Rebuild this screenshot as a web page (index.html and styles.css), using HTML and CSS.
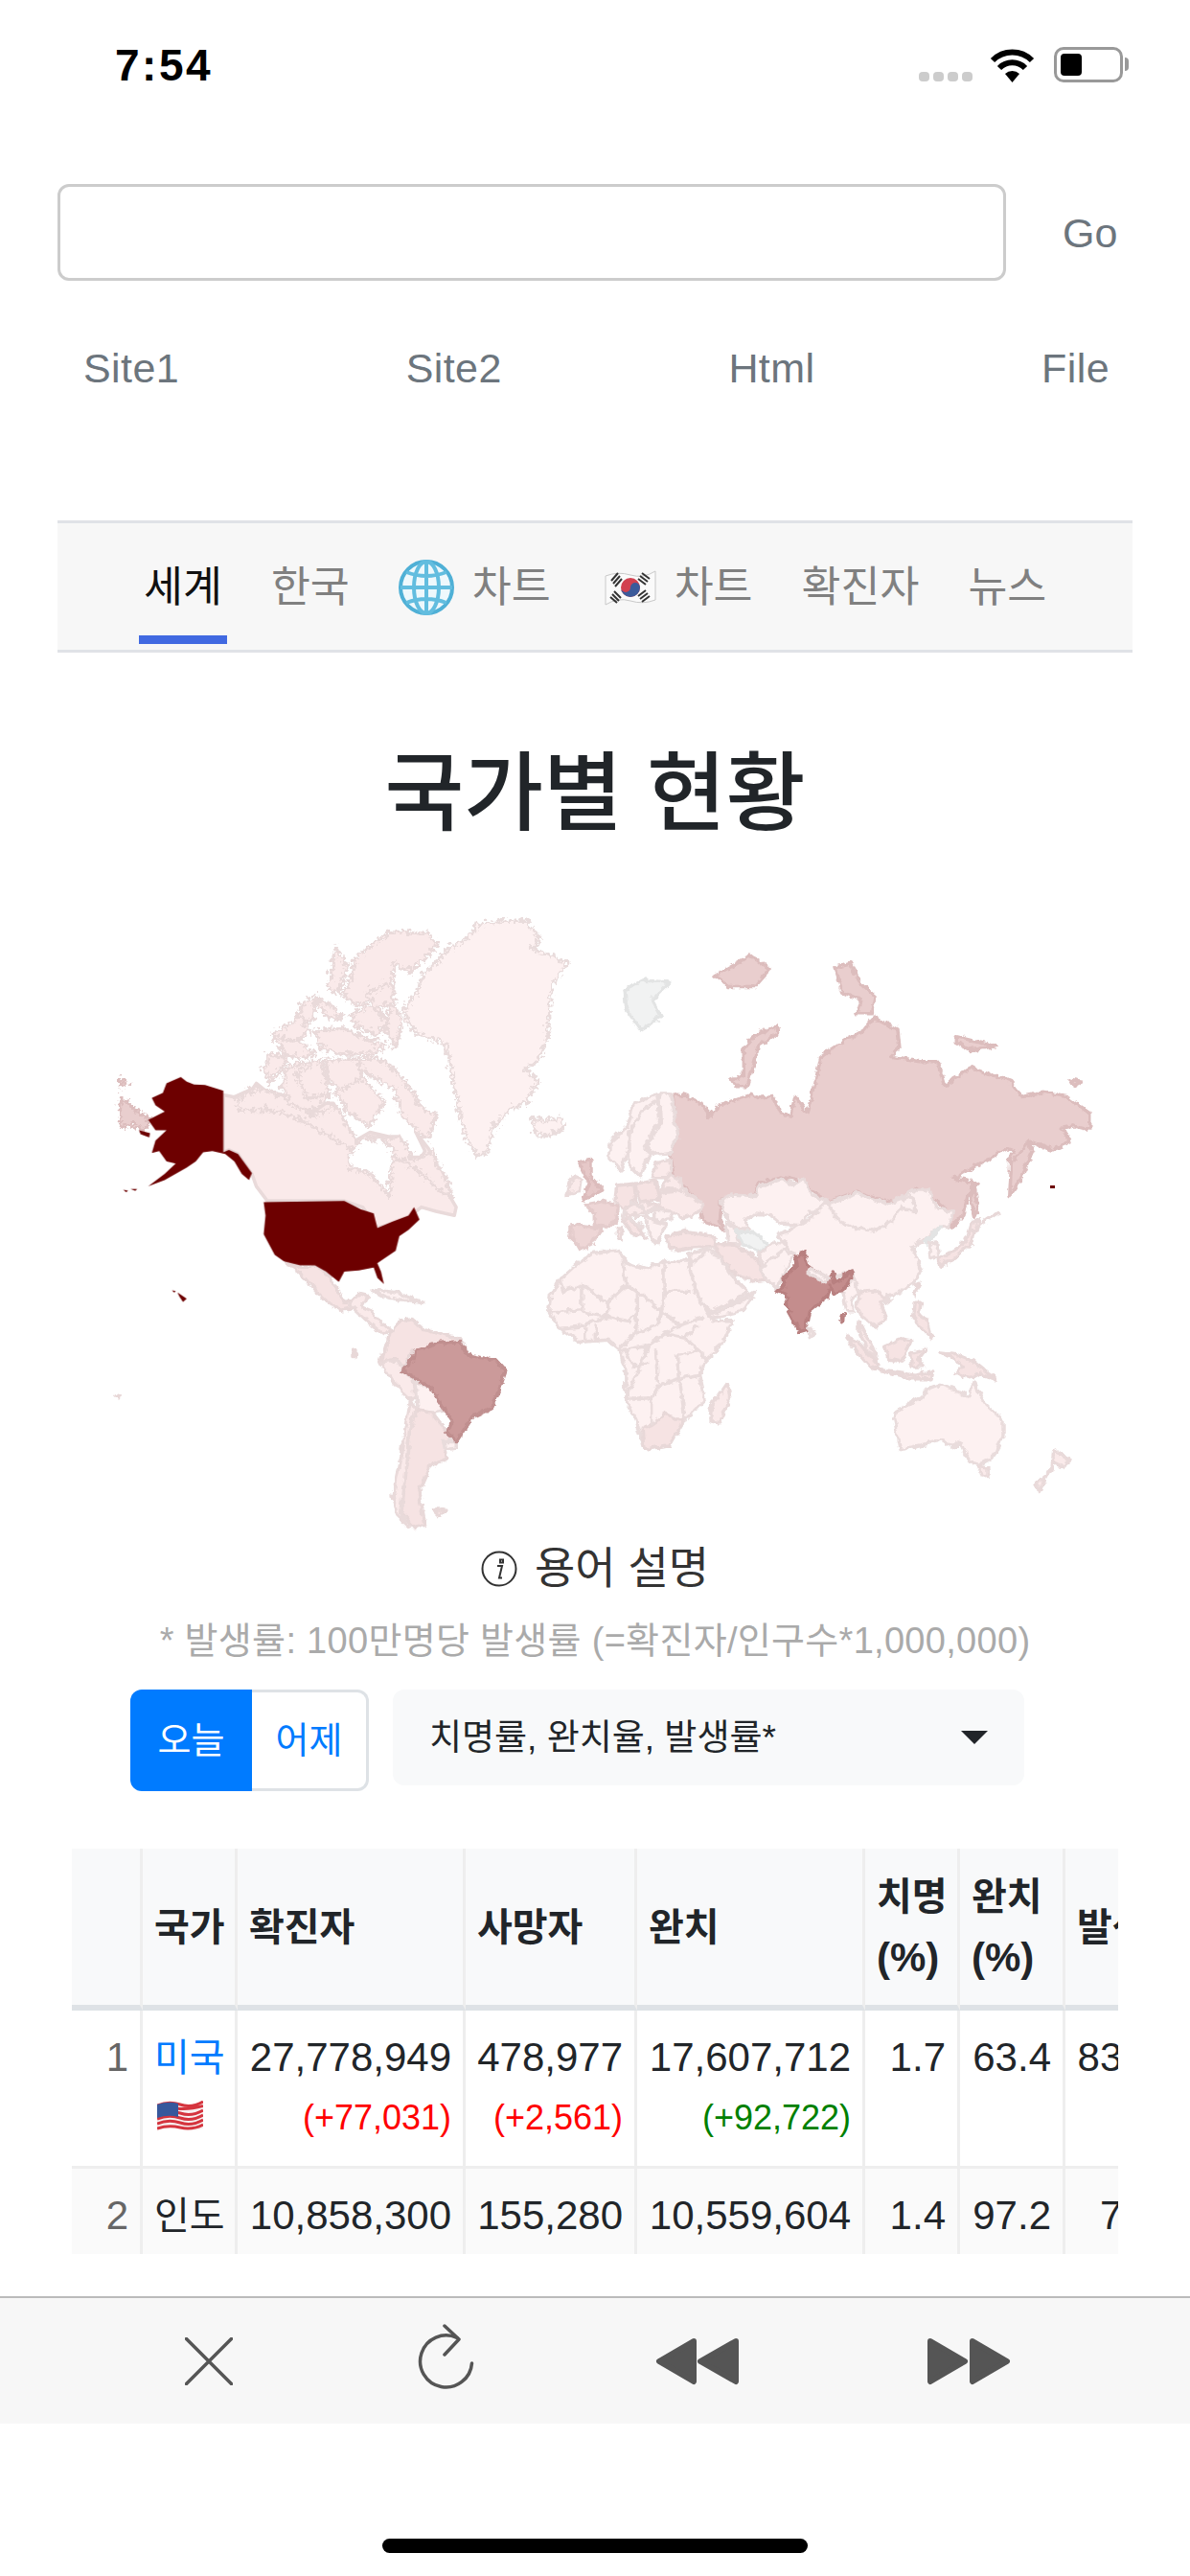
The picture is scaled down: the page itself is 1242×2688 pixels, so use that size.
FILE: index.html
```html
<!DOCTYPE html>
<html lang="ko">
<head>
    <meta charset="UTF-8">
    <meta name="viewport" content="width=device-width, initial-scale=1.0">
    <title>국가별 현황</title>
    <link rel="stylesheet" href="styles.css">
</head>
<body>

<div class="status-bar">
    <span class="clock">7:54</span>
    <div class="status-icons">
        <span class="signal"><i></i><i></i><i></i><i></i></span>
        <svg class="wifi" width="47" height="36" viewBox="0 0 47 36">
            <path d="M3 13A29 29 0 0 1 44 13" fill="none" stroke="#000" stroke-width="6"/>
            <path d="M10 21A19 19 0 0 1 37 21" fill="none" stroke="#000" stroke-width="6"/>
            <path d="M16 27L23.5 36L31 27A11 11 0 0 0 16 27Z" fill="#000"/>
        </svg>
        <span class="battery"><b></b></span>
    </div>
</div>

<div class="url-row">
    <input class="url-input" type="text">
    <span class="go">Go</span>
</div>

<div class="site-links">
    <span>Site1</span>
    <span>Site2</span>
    <span>Html</span>
    <span>File</span>
</div>

<div class="tabs">
    <span class="tab active">세계</span>
    <span class="tab">한국</span>
    <span class="tab">
        <svg width="58" height="58" viewBox="0 0 58 58">
            <circle cx="29" cy="29" r="27" fill="#eef8fc" stroke="#4fb0d6" stroke-width="4"/>
            <ellipse cx="29" cy="29" rx="13" ry="27" fill="none" stroke="#62bddf" stroke-width="4"/>
            <path d="M29 2V56M2 29H56M8 13Q29 21 50 13M8 45Q29 37 50 45" fill="none" stroke="#62bddf" stroke-width="4"/>
        </svg>
        차트
    </span>
    <span class="tab">
        <svg class="kr-flag" width="54" height="40" viewBox="0 0 54 40">
            <path d="M1 8Q14 3 27 7T53 3V33Q40 38 27 34T1 38Z" fill="#fafafa" stroke="#c9c9c9" stroke-width="1"/>
            <circle cx="27" cy="20" r="10" fill="#d2404f"/>
            <path d="M17 20A5 5 0 0 0 27 20A5 5 0 0 1 37 20A10 10 0 0 1 17 20Z" fill="#3b5a9a"/>
            <path d="M9 16L16 8M11 19L18 11M7 13L14 5M37 8L45 14M35 11L43 17M39 5L47 11M8 27L15 34M6 30L13 36M10 24L17 31M37 32L45 26M39 35L47 29M35 29L43 23" stroke="#333" stroke-width="2" fill="none"/>
        </svg>
        차트
    </span>
    <span class="tab">확진자</span>
    <span class="tab">뉴스</span>
</div>

<h1 class="page-title">국가별 현황</h1>

<svg class="world-map" width="1242" height="650" viewBox="0 950 1242 650">
    <defs>
        <filter id="rough" filterUnits="userSpaceOnUse" x="0" y="950" width="1242" height="650">
            <feTurbulence type="turbulence" baseFrequency="0.16" numOctaves="2" seed="4"/>
            <feDisplacementMap in="SourceGraphic" scale="11" xChannelSelector="R" yChannelSelector="G"/>
        </filter>
        <filter id="mild" filterUnits="userSpaceOnUse" x="0" y="950" width="1242" height="650">
            <feTurbulence type="turbulence" baseFrequency="0.09" numOctaves="2" seed="9"/>
            <feDisplacementMap in="SourceGraphic" scale="6" xChannelSelector="R" yChannelSelector="G"/>
        </filter>
    </defs>
    <g transform="translate(80 930) scale(.3827 .4337)">
        <polygon class="g2" points="400,490 430,495 480,475 490,462 515,480 560,490 575,515 630,510 640,535 680,510 700,510 740,570 760,600 800,580 850,590 880,590 910,640 940,640 950,625 925,580 960,620 1000,690 1015,730 1035,760 1030,780 980,770 940,760 905,785 860,800 820,810 780,760 730,745 520,745 490,710 478,680 440,632 415,622 400,628"/>
    </g>
    <g class="rough">
        <g transform="translate(80 930) scale(.3827 .4337)">
            <polygon class="r" points="111,490 140,510 190,540 175,570 145,555 111,560"/>
            <polygon class="r" points="111,445 135,455 115,465"/>
            <polygon class="g2" points="430,495 490,465 560,490 640,535 700,510 740,570 760,600 800,580 880,590 910,640 950,625 960,620 1000,690 1015,730 990,720 940,680 880,640 800,620 730,610 660,570 600,540 520,520 440,520"/>
            <polygon class="hole" points="730,630 770,590 830,590 860,620 850,660 845,730 820,700 790,670 740,660"/>
            <polygon class="g2" points="760,400 800,395 850,410 900,470 940,520 975,530 950,590 920,570 880,530 860,470 820,450 780,430"/>
            <polygon class="g2" points="560,420 640,400 660,430 640,470 690,480 640,520 580,510 555,470"/>
            <polygon class="g2" points="505,420 515,385 570,390 550,420 520,455"/>
            <polygon class="g2" points="750,160 800,120 850,90 950,95 975,125 900,190 860,170 850,250 830,240 770,270 720,250 740,200"/>
            <polygon class="g2" points="525,340 580,310 620,275 625,340 590,350 560,365"/>
            <polygon class="g2" points="650,250 690,270 720,300 680,300 660,280"/>
            <polygon class="g2" points="640,330 720,320 770,345 840,365 800,385 720,385 660,370"/>
            <polygon class="g2" points="740,290 800,270 850,310 810,340 760,320"/>
            <polygon class="g2" points="670,400 760,395 770,440 720,480 680,450"/>
            <polygon class="g2" points="590,430 660,400 680,480 620,490"/>
            <polygon class="g2" points="700,480 770,440 830,500 790,560 730,520"/>
            <polygon class="g2" points="700,130 730,170 710,240 680,230 690,170"/>
            <polygon class="g2" points="600,270 650,245 640,300 610,310"/>
            <polygon class="g2" points="530,345 600,355 640,385 600,395 560,385"/>
            <polygon class="g2" points="850,260 880,300 860,370 835,320"/>
            <polygon class="g2" points="780,240 850,215 860,260 810,275"/>
            <polygon class="g1" points="885,280 920,240 930,205 975,165 1010,130 1060,105 1085,75 1150,65 1220,65 1255,110 1235,130 1290,150 1330,165 1290,220 1280,290 1275,350 1250,400 1215,420 1250,450 1220,500 1170,520 1130,560 1110,620 1090,630 1060,600 1040,540 1030,490 1015,430 1000,360 940,345 900,320"/>
            <polygon class="g1" points="1235,540 1270,545 1315,540 1318,565 1275,582 1245,578"/>
        </g>
    </g>
    <g class="mild">
        <g transform="translate(80 930) scale(.3827 .4337)">
            <polygon class="g3" points="565,890 610,900 650,900 690,925 710,960 725,985 760,975 745,1000 720,1005 680,985 650,960 630,940 600,910"/>
            <polygon class="g2" points="740,990 765,965 790,970 775,995 800,1005 815,1025 850,1050 835,1065 800,1040 770,1015"/>
            <polygon class="g1" points="800,955 860,960 940,985 880,980 840,975"/>
            <polygon class="g3" points="850,1060 880,1030 910,1025 940,1050 985,1060 1045,1075 1060,1100 1015,1095 985,1085 960,1105 915,1100 885,1145 870,1120 825,1130"/>
            <polygon class="g2" points="825,1130 870,1125 885,1150 915,1170 920,1220 900,1215 860,1180"/>
            <polygon class="g1" points="920,1175 960,1190 990,1230 1000,1245 965,1250 925,1245"/>
            <polygon class="g3" points="920,1245 965,1250 1000,1290 1020,1300 1000,1340 1005,1360 960,1380 930,1440 945,1520 920,1530 880,1490 895,1380 905,1300"/>
            <polygon class="g2" points="905,1220 920,1245 905,1300 895,1380 880,1490 900,1525 870,1500 860,1450 880,1360 895,1280"/>
            <polygon class="g1" points="995,1320 1030,1320 1030,1335 1000,1340"/>
            <polygon class="g3" points="750,1100 762,1112 750,1115"/>
            <polygon class="g3" points="968,1485 1003,1485 985,1500"/>
            <polygon class="g3" points="102,1210 118,1212 110,1217"/>
            <polygon class="br" points="1045,1080 1060,1110 1140,1125 1165,1150 1130,1240 1070,1265 1030,1320 1005,1300 1020,1270 990,1230 960,1190 925,1170 885,1150 915,1120 920,1100 980,1085"/>
        </g>
        <g transform="translate(560 930) scale(.3827 .4337)">
            <polygon class="sv" points="235,235 290,210 360,215 310,260 335,300 280,330 240,280"/>
            <polygon class="r" points="480,200 520,180 580,150 630,185 590,225 520,225"/>
            <polygon class="r" points="810,180 850,170 880,220 920,250 910,290 870,290 880,260 830,240"/>
            <polygon class="r" points="1140,345 1250,370 1180,380 1140,360"/>
            <polygon class="r" points="1450,450 1480,455 1460,465"/>
            <polygon class="r" points="530,450 560,440 560,380 590,345 650,320 655,340 600,370 585,420 570,465 540,465"/>
            <polygon class="r" points="365,485 400,490 450,510 465,540 480,525 495,510 530,500 580,485 600,495 640,490 660,530 690,535 700,490 735,530 750,480 770,395 830,360 890,330 915,300 980,330 985,375 960,395 1040,405 1090,405 1110,465 1180,420 1240,440 1290,455 1320,490 1380,480 1440,490 1507,530 1507,570 1460,560 1430,565 1450,600 1400,620 1345,600 1300,670 1285,640 1300,620 1280,615 1230,640 1170,670 1135,690 1175,695 1200,700 1170,730 1160,775 1130,805 1105,790 1110,760 1060,720 1030,710 1020,745 960,745 870,720 790,745 715,695 660,685 600,700 590,730 500,740 495,790 510,810 450,790 435,740 370,690 360,630 380,590"/>
            <polygon class="r" points="1285,730 1290,650 1340,600 1350,620 1330,660 1310,700"/>
            <polygon class="r" points="1185,690 1200,760 1190,780 1180,740"/>
            <polygon class="g1" points="35,970 60,930 110,890 150,865 220,860 240,890 290,905 340,890 410,885 430,960 480,1030 530,1030 500,1090 460,1120 440,1160 455,1220 400,1270 360,1330 290,1340 270,1280 240,1215 240,1160 225,1100 190,1075 110,1080 60,1050 30,1010"/>
            <polygon class="g3" points="285,1290 310,1280 350,1255 395,1270 360,1330 290,1340"/>
            <g class="borders">
                <polyline points="120,940 190,990 190,1020 120,1010"/>
                <polyline points="60,930 70,960 120,945 120,1005 35,1010"/>
                <polyline points="230,880 240,945 190,985"/>
                <polyline points="240,945 270,960 270,1010"/>
                <polyline points="345,890 345,960 420,960"/>
                <polyline points="270,960 335,1005 325,1040"/>
                <polyline points="345,960 335,1010 390,1040 455,1020"/>
                <polyline points="190,1020 250,1030 270,1010 265,1060 225,1095"/>
                <polyline points="325,1040 265,1060"/>
                <polyline points="60,1050 110,1045 190,1020"/>
                <polyline points="130,1045 130,1075"/>
                <polyline points="160,1040 160,1075"/>
                <polyline points="225,1100 300,1090 345,1060 390,1040"/>
                <polyline points="400,1070 460,1120"/>
                <polyline points="300,1090 270,1160 240,1215 310,1215 330,1185 385,1170 380,1110"/>
                <polyline points="320,1100 325,1180"/>
                <polyline points="380,1115 440,1100"/>
                <polyline points="385,1170 440,1160"/>
                <polyline points="310,1215 310,1280"/>
                <polyline points="385,1170 400,1270"/>
                <polyline points="440,1040 400,1070 345,1060"/>
                <polyline points="240,1100 260,1140 300,1130"/>
            </g>
            <polygon class="g2" points="475,1230 515,1180 525,1215 495,1275 470,1270"/>
            <polygon class="g2" points="1405,1340 1450,1365 1430,1380 1405,1370 1365,1440 1360,1420 1400,1390"/>
        </g>
        <g transform="translate(570 1140) scale(.3333)">
            <polygon class="g1" points="195,205 195,155 250,100 270,30 340,0 350,20 300,50 260,110 255,165 230,240"/>
            <polygon class="g1" points="260,110 300,50 345,20 350,85 305,160 320,190 290,260 255,225 255,150"/>
            <polygon class="g1" points="350,0 385,0 410,130 385,185 330,190 310,160 355,90"/>
            <polygon class="g2" points="340,215 385,205 385,260 330,260"/>
            <polygon class="g2" points="355,300 385,255 415,270 420,300"/>
            <polygon class="g2" points="355,310 420,300 490,345 470,375 420,390 350,350"/>
            <polygon class="g3" points="275,280 340,270 350,330 290,340"/>
            <polygon class="g3" points="215,285 270,280 275,335 240,360 210,335"/>
            <polygon class="g4" points="120,345 170,335 220,350 215,400 180,415 145,410 145,370"/>
            <polygon class="g4" points="75,410 170,420 140,470 100,490 75,445"/>
            <polygon class="g5" points="95,215 135,205 135,260 170,300 110,330 130,280"/>
            <polygon class="g2" points="60,315 80,260 105,270 100,305"/>
            <polygon class="g3" points="235,395 255,385 310,450 295,440 270,440"/>
            <polygon class="g3" points="220,420 235,420 232,460 220,460"/>
            <polygon class="g2" points="240,360 290,340 350,350 335,360 300,370 250,385"/>
            <polygon class="g1" points="335,360 385,365 390,395 335,400"/>
            <polygon class="g1" points="300,385 335,400 370,410 340,470 320,440"/>
            <g class="borders">
                <polyline points="300,370 335,360"/>
                <polyline points="255,345 300,355 310,385 275,385"/>
                <polyline points="250,385 300,420"/>
                <polyline points="240,360 235,395"/>
            </g>
            <polygon class="g3" points="375,445 430,430 520,445 530,475 450,480 410,490 380,480"/>
            <polygon class="g1" points="440,500 520,480 530,500 550,555 500,560 450,530"/>
            <polygon class="g1" points="545,335 575,315 650,320 665,290 730,265 770,285 800,265 830,320 890,340 860,370 820,370 790,410 730,405 700,380 650,375 620,400 630,420 590,420 555,375"/>
            <polygon class="g1" points="560,400 590,425 600,470 565,470"/>
            <polygon class="g3" points="530,470 570,470 600,480 660,520 680,580 640,585 580,560 530,490"/>
            <polygon class="sv" points="590,430 640,430 690,470 660,495 610,470"/>
            <polygon class="g1" points="660,500 710,465 755,470 735,510 680,560"/>
            <polygon class="g1" points="665,545 740,490 770,505 745,555 715,610 680,575"/>
            <polygon class="g1" points="440,540 500,490 540,510 580,570 630,620 600,640 510,680 480,650"/>
            <polygon class="g1" points="510,690 600,650 650,620 610,680 520,700"/>
        </g>
        <g transform="translate(780 1240) scale(.3333)">
            <polygon class="g1" points="240,45 340,10 440,45 520,0 565,0 590,60 640,70 625,120 600,115 560,150 510,180 540,240 520,290 470,320 420,340 400,315 340,320 325,255 255,280 190,240 130,190 90,140 130,125 190,90"/>
            <polygon class="g1" points="245,45 340,10 440,45 510,20 525,70 480,55 450,95 395,130 330,120 280,95"/>
            <polygon class="g1" points="330,270 345,320 320,340 330,380 305,380 295,330 290,320"/>
            <polygon class="g2" points="345,325 400,315 430,345 410,350 430,400 400,435 385,420 350,390 340,370"/>
            <polygon class="g2" points="345,410 380,480 400,530 370,500 345,440"/>
            <polygon class="g3" points="305,460 345,480 405,550 385,560 340,510"/>
            <polygon class="g3" points="390,560 520,580 575,570 570,590 500,590"/>
            <polygon class="g3" points="425,490 480,465 510,470 500,495 475,540 435,530"/>
            <polygon class="g3" points="510,510 555,500 530,530 545,555 510,555"/>
            <polygon class="g3" points="520,355 540,355 535,390 560,405 575,465 545,440 515,395"/>
            <polygon class="g3" points="600,510 650,515 700,535 775,595 720,575 690,590 650,575 670,550"/>
            <polygon class="g3" points="525,295 535,295 520,330"/>
            <polygon class="g3" points="595,215 650,185 680,160 695,110 705,130 700,165 650,210 600,240"/>
            <polygon class="g3" points="700,100 725,95 715,125 695,125"/>
            <polyline class="g3" points="725,110 785,70"/>
            <polygon class="sv" points="555,160 600,115 575,150 560,170"/>
            <polygon class="g1" points="565,170 590,165 595,205 570,215"/>
            <polygon class="g1" points="420,350 445,335 440,355"/>
            <polygon class="in" points="175,200 185,235 195,245 250,280 262,255 270,290 320,255 325,265 290,320 265,325 258,300 245,335 190,380 178,440 160,445 125,380 118,325 90,315 110,305 105,280 150,235 145,210"/>
            <polygon class="g1" points="190,245 250,275 245,290 190,265"/>
            <polygon class="g1" points="185,430 205,450 190,462"/>
            <polygon class="in" points="288,395 298,395 296,415 288,412"/>
            <polygon class="g1" points="460,695 540,650 560,625 600,610 645,625 690,650 705,600 740,670 795,720 795,770 770,835 725,860 690,850 660,790 640,810 610,785 540,800 475,815 455,720"/>
            <polygon class="g2" points="720,865 750,870 750,895 730,897"/>
        </g>
    </g>
    <g transform="translate(80 930) scale(.3827 .4337)">
        <g class="us">
            <polygon points="284,447 300,458 320,465 350,466 400,480 400,628 415,622 440,632 478,678 470,695 450,680 430,650 405,632 370,625 345,628 325,650 300,665 270,680 240,695 195,710 240,680 270,655 245,650 225,625 205,630 215,600 245,575 215,575 195,550 240,530 215,515 205,497 235,485 245,462"/>
            <polygon points="170,575 200,582 198,592 175,585"/>
            <polygon points="127,718 140,720 135,724"/>
            <polygon points="147,716 165,716 160,721"/>
            <polygon points="510,748 730,745 775,765 810,775 820,810 860,795 905,780 920,760 935,790 905,815 880,830 870,865 820,895 830,915 838,945 820,930 810,905 770,912 730,915 715,940 680,915 650,900 610,900 565,890 540,875 510,825 515,780"/>
            <polygon points="260,960 270,962 266,966"/>
            <polygon points="275,965 300,980 290,988 280,975"/>
        </g>
    </g>
    <polygon class="us-dot" points="1096,1237 1101,1237 1101,1240 1096,1240"/>
</svg>

<div class="glossary">
    <svg width="38" height="38" viewBox="0 0 38 38">
        <circle cx="19" cy="19" r="17.5" fill="none" stroke="#333" stroke-width="2"/>
        <path d="M20 9.5h3v3h-3zM17 16h5l-3 12.5h3" fill="none" stroke="#333" stroke-width="2"/>
    </svg>
    <span>용어 설명</span>
</div>
<p class="note">* 발생률: 100만명당 발생률 (=확진자/인구수*1,000,000)</p>

<div class="controls">
    <div class="day-toggle">
        <span class="day on">오늘</span>
        <span class="day off">어제</span>
    </div>
    <div class="rate-select">
        <span>치명률, 완치율, 발생률*</span>
        <i class="caret"></i>
    </div>
</div>

<div class="table-wrap">
    <table class="stats">
        <colgroup>
            <col class="c-rank"><col class="c-name"><col class="c-wide"><col class="c-mid"><col class="c-wide"><col class="c-name"><col class="c-pct"><col class="c-last">
        </colgroup>
        <thead>
            <tr>
                <th></th>
                <th><span class="ko">국가</span></th>
                <th><span class="ko">확진자</span></th>
                <th><span class="ko">사망자</span></th>
                <th><span class="ko">완치</span></th>
                <th><span class="ko">치명</span><br>(%)</th>
                <th><span class="ko">완치</span><br>(%)</th>
                <th><span class="ko">발생률*</span></th>
            </tr>
        </thead>
        <tbody>
            <tr>
                <td class="num rank">1</td>
                <td>
                    <a class="ko country" href="#">미국</a>
                    <svg class="flag" width="48" height="33" viewBox="0 0 48 33">
                        <path d="M0 5Q12 0 24 4T48 1V29Q36 33 24 29T0 32Z" fill="#f7f0f0"/>
                        <path d="M0 5Q12 0 24 4T48 1M0 14Q12 9 24 13T48 10M0 19Q12 14 24 18T48 15M0 24Q12 19 24 23T48 20M0 29Q12 25 24 28T48 25M20 8Q32 10 48 5.500" fill="none" stroke="#d5343e" stroke-width="3"/>
                        <path d="M0 4Q12 0 22 3V17Q12 14 0 18Z" fill="#37589c"/>
                    </svg>
                </td>
                <td class="num">27,778,949<span class="delta up">(+77,031)</span></td>
                <td class="num">478,977<span class="delta up">(+2,561)</span></td>
                <td class="num">17,607,712<span class="delta down">(+92,722)</span></td>
                <td class="num">1.7</td>
                <td class="num">63.4</td>
                <td class="num">83,926</td>
            </tr>
            <tr class="striped">
                <td class="num rank">2</td>
                <td><span class="ko">인도</span></td>
                <td class="num">10,858,300</td>
                <td class="num">155,280</td>
                <td class="num">10,559,604</td>
                <td class="num">1.4</td>
                <td class="num">97.2</td>
                <td class="num">7,865</td>
            </tr>
        </tbody>
    </table>
</div>

<div class="toolbar">
    <svg class="tool-close" width="50" height="50" viewBox="0 0 50 50">
        <path d="M1.500 1.500L48.500 48.500M48.500 1.500L1.500 48.500" fill="none" stroke="#555" stroke-width="3.500" stroke-linecap="round"/>
    </svg>
    <svg class="tool-reload" width="60" height="78" viewBox="0 0 60 78">
        <path d="M42 14.500A27 27 0 1 0 57.500 41" fill="none" stroke="#555" stroke-width="3.500" stroke-linecap="round"/>
        <path d="M29 2L44 16L29 32" fill="none" stroke="#555" stroke-width="3.500" stroke-linecap="round" stroke-linejoin="round"/>
    </svg>
    <svg class="tool-back" width="87" height="50" viewBox="0 0 87 50">
        <path d="M40 4L4 25L40 46ZM84 4L47 25L84 46Z" fill="#555" stroke="#555" stroke-width="6" stroke-linejoin="round"/>
    </svg>
    <svg class="tool-forward" width="87" height="50" viewBox="0 0 87 50">
        <path d="M3 4L39 25L3 46ZM47 4L83 25L47 46Z" fill="#555" stroke="#555" stroke-width="6" stroke-linejoin="round"/>
    </svg>
</div>

<div class="home-bar"></div>

</body>
</html>
```

FILE: styles.css
```css
* {
    box-sizing: border-box;
}
body {
    margin: 0;
    width: 1242px;
    height: 2688px;
    overflow: hidden;
    background: #fff;
    color: #212529;
    font-family: "Liberation Sans", "Noto Sans CJK KR", sans-serif;
    font-size: 42px;
    line-height: 63px;
}
.status-bar {
    height: 132px;
    padding: 49px 70px 0 120px;
    display: flex;
    justify-content: space-between;
    align-items: flex-start;
}
.clock {
    color: #000;
    font-size: 46px;
    font-weight: bold;
    line-height: 38px;
    letter-spacing: 2.500px;
}
.status-icons {
    display: flex;
    align-items: flex-end;
    height: 37px;
}
.signal {
    display: flex;
    gap: 4px;
    margin: 0 18px 1px 0;
}
.signal i {
    width: 11px;
    height: 10px;
    border-radius: 4px;
    background: #ccc;
}
.battery {
    position: relative;
    width: 72px;
    height: 37px;
    margin-left: 20px;
    padding: 4px;
    border: 3px solid #999;
    border-radius: 10px;
}
.battery b {
    display: block;
    width: 22px;
    height: 100%;
    border-radius: 4px;
    background: #000;
}
.battery:after {
    content: "";
    position: absolute;
    right: -9px;
    top: 8px;
    width: 4px;
    height: 14px;
    border-radius: 0 4px 4px 0;
    background: #999;
}
.url-row {
    margin-top: 60px;
    padding-left: 60px;
    display: flex;
    align-items: center;
}
.url-input {
    width: 990px;
    height: 101px;
    border: 3px solid #ccc;
    border-radius: 12px;
    background: #fff;
}
.go {
    margin: 2px 0 0 59px;
    color: #6c757d;
    font-size: 43px;
}
.site-links {
    margin-top: 60px;
    padding: 0 84px 0 87px;
    display: flex;
    justify-content: space-between;
    color: #6c757d;
    font-size: 43px;
    letter-spacing: .400px;
}
.tabs {
    margin: 127px 60px 0;
    height: 138px;
    padding: 0 0 6px 85px;
    display: flex;
    gap: 41px;
    align-items: flex-end;
    background: #f7f7f7;
    border-top: 3px solid #e0e2e7;
    border-bottom: 3px solid #e0e2e7;
    color: #808080;
    font-size: 44.500px;
}
.tab {
    height: 90px;
    padding: 0 5px 20px;
    display: flex;
    gap: 19px;
    align-items: center;
    border-bottom: 9px solid transparent;
    white-space: nowrap;
}
.tab.active {
    color: #111;
    border-bottom-color: #4169e1;
}
.kr-flag {
    margin-left: 5px;
}
.page-title {
    margin: 93px 0 68px;
    text-align: center;
    font-size: 90px;
    font-weight: 500;
    line-height: 108px;
}
.world-map {
    display: block;
}
.world-map * {
    vector-effect: non-scaling-stroke;
    stroke-width: 3.500px;
    stroke-linejoin: round;
}
.rough { filter: url(#rough); }
.mild { filter: url(#mild); }
.g1 { fill: #fdf1f1; stroke: #e9dcdc; }
.g2 { fill: #faeaea; stroke: #e9dada; }
.g3 { fill: #f6e3e3; stroke: #e8d8d8; }
.g4 { fill: #eed6d6; stroke: #e4cccc; }
.g5 { fill: #e6c8c8; stroke: #dcbcbc; }
.r { fill: #e9cece; stroke: #dcbdbd; }
.br { fill: #cb9a9a; stroke: #c08f8f; }
.in { fill: #c48d8d; stroke: #b88080; }
.sv { fill: #f1f2f2; stroke: #e3e4e4; }
.hole { fill: #fff; stroke: #e9dada; }
.us { fill: #6d0000; }
.us * { stroke: none; }
.us-dot { fill: #6d0000; stroke: none; }
.borders polyline { fill: none; stroke: #e9dcdc; }
.glossary {
    margin-top: 5px;
    display: flex;
    justify-content: center;
    align-items: center;
    gap: 18px;
    color: #333;
    font-size: 46px;
}
.note {
    margin: 17px 0 0;
    text-align: center;
    color: #aaa;
    font-size: 38px;
    letter-spacing: .300px;
    line-height: 54px;
}
.controls {
    margin: 24px 0 0 136px;
    display: flex;
    gap: 25px;
    align-items: flex-start;
}
.day-toggle {
    width: 249px;
    height: 106px;
    display: flex;
}
.day {
    display: flex;
    align-items: center;
    justify-content: center;
    font-size: 38px;
}
.day.on {
    flex: 0 0 127px;
    border-radius: 12px 0 0 12px;
    background: #007bff;
    color: #fff;
}
.day.off {
    flex: 1;
    border: 3px solid #dee2e6;
    border-left: none;
    border-radius: 0 12px 12px 0;
    color: #007bff;
}
.rate-select {
    width: 659px;
    height: 100px;
    padding: 0 38px;
    display: flex;
    justify-content: space-between;
    align-items: center;
    border-radius: 12px;
    background: #f8f9fa;
    font-size: 37px;
}
.caret {
    width: 0;
    height: 0;
    border-top: 14px solid #212529;
    border-left: 14px solid transparent;
    border-right: 14px solid transparent;
}
.table-wrap {
    margin: 60px 0 0 75px;
    width: 1092px;
    height: 423px;
    overflow: hidden;
}
.stats {
    width: 1191px;
    table-layout: fixed;
    border-collapse: separate;
    border-spacing: 0;
}
.c-rank { width: 74px; }
.c-name { width: 99px; }
.c-wide { width: 238px; }
.c-mid { width: 179px; }
.c-pct { width: 110px; }
.c-last { width: 156px; }
.stats th, .stats td {
    padding: 18px 12px;
    border-right: 3px solid #eee;
    white-space: nowrap;
    overflow: hidden;
}
.stats th {
    background: #f8f9fa;
    border-bottom: 6px solid #dee2e6;
    text-align: left;
    vertical-align: middle;
}
.stats td {
    padding: 17px 12px 19px;
    border-bottom: 3px solid #eee;
    vertical-align: top;
}
.ko {
    font-size: 40px;
}
.country {
    color: #007bff;
    text-decoration: none;
}
.flag {
    display: block;
    margin: 13px 0 0 3px;
}
.num {
    text-align: right;
}
.rank {
    color: #666;
}
.delta {
    display: block;
    font-size: 36px;
}
.up { color: #f00; }
.down { color: #008000; }
.striped td {
    background: #fafafa;
}
.toolbar {
    margin-top: 44px;
    height: 133px;
    padding-left: 193px;
    display: flex;
    align-items: center;
    background: #f7f7f7;
    border-top: 2px solid #bbb;
}
.tool-reload { margin-left: 192px; }
.tool-back { margin-left: 189px; }
.tool-forward { margin-left: 197px; }
.home-bar {
    width: 444px;
    height: 15px;
    margin: 120px auto 0;
    border-radius: 8px;
    background: #000;
}
```
